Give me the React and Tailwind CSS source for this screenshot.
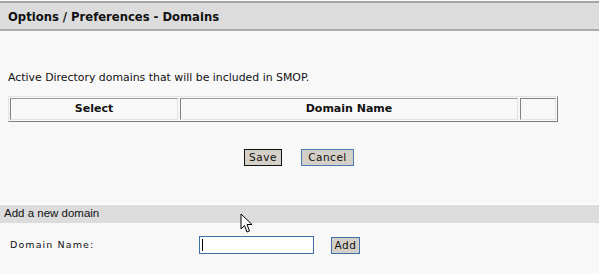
export default function App() {
  const verdana = { fontFamily: '"DejaVu Sans", Verdana, sans-serif' }
  return (
    <div className="relative w-[599px] h-[274px] overflow-hidden bg-[#f8f8f8]" style={verdana}>
      {/* page header */}
      <div className="mt-px border-t-2 border-[#a4a4a4] bg-[#dcdcdc] h-[30px] border-b-2 border-b-[#ababab] flex items-center pl-2">
        <span className="text-[11.6px] font-bold text-[#111] pt-[3px]">Options / Preferences - Domains</span>
      </div>

      <div className="px-2">
        <p className="mt-[40px] text-[10.9px] text-[#111] leading-[13px]">
          Active Directory domains that will be included in SMOP.
        </p>

        {/* domains table */}
        <div className="mt-[12px] w-[550px] h-[26px] border border-t-[#e4e4e4] border-l-[#e4e4e4] border-r-[#808080] border-b-[#808080] flex gap-[2px] p-px">
          <div className="w-[168px] border border-t-[#9a9a9a] border-l-[#808080] border-r-[#e4e4e4] border-b-[#e4e4e4] flex items-center justify-center text-[11px] font-bold text-[#111]">
            Select
          </div>
          <div className="w-[338px] border border-t-[#9a9a9a] border-l-[#808080] border-r-[#e4e4e4] border-b-[#e4e4e4] flex items-center justify-center text-[11px] font-bold text-[#111]">
            Domain Name
          </div>
          <div className="w-[36px] border border-t-[#808080] border-l-[#808080] border-r-[#e4e4e4] border-b-[#e4e4e4]" />
        </div>

        {/* actions */}
        <div className="mt-[27px] flex gap-[19px] pl-[236px]">
          <button className="w-[38px] h-[17px] bg-[#d4d0c8] border border-[#111] text-[10.5px] leading-none text-[#111] tracking-[0.5px]">
            Save
          </button>
          <button className="w-[53px] h-[17px] bg-[#d4d0c8] border border-[#4a7ab8] text-[10.5px] leading-none text-[#111] tracking-[0.5px]">
            Cancel
          </button>
        </div>
      </div>

      {/* add section */}
      <div className="mt-[38px] border-t border-white h-[19px] bg-[#dcdcdc] flex items-center pl-1">
        <span className="text-[11.5px] text-[#111]" style={{ fontFamily: '"Liberation Sans", Tahoma, sans-serif' }}>Add a new domain</span>
      </div>

      <div className="mt-[13px] flex items-center pl-[10px]">
        <span className="w-[189px] text-[9.5px] tracking-[1.1px] text-[#111]">Domain Name:</span>
        <div className="w-[115px] h-[18px] bg-white border border-[#3f6fa8] flex items-center pl-[2px]">
          <span className="w-px h-[12px] bg-black" />
        </div>
        <button className="ml-[17px] w-[29px] h-[17px] bg-[#d4d0c8] border border-[#3f6fa8] text-[10.5px] leading-none text-[#111] tracking-[0.5px]">
          Add
        </button>
      </div>

      {/* mouse pointer */}
      <svg className="absolute left-[240px] top-[213px]" width="14" height="22" viewBox="0 0 14 22">
        <path d="M1 1 L1 16 L4.5 12.5 L7 19 L9.5 18 L7 11.5 L12 11.5 Z" fill="white" stroke="black" strokeWidth="1" strokeLinejoin="miter" />
      </svg>
    </div>
  )
}
